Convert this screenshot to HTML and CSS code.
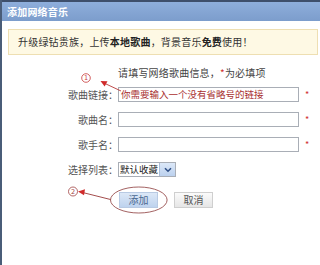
FILE: index.html
```html
<!DOCTYPE html>
<html lang="zh-CN">
<head>
<meta charset="utf-8">
<title>添加网络音乐</title>
<link rel="stylesheet" href="styles.css">
</head>
<body>
<div class="win">
  <div class="titlebar">添加网络音乐</div>
  <div class="notice">升级绿钻贵族，上传<b>本地歌曲</b>，背景音乐<b>免费</b>使用！</div>
  <div class="intro">请填写网络歌曲信息，<span class="star">*</span>为必填项</div>
  <div class="form">
    <div class="row">
      <span class="label">歌曲链接：</span>
      <div class="input hint">你需要输入一个没有省略号的链接</div>
      <span class="req">*</span>
    </div>
    <div class="row">
      <span class="label">歌曲名：</span>
      <div class="input"></div>
      <span class="req">*</span>
    </div>
    <div class="row">
      <span class="label">歌手名：</span>
      <div class="input"></div>
      <span class="req">*</span>
    </div>
    <div class="row">
      <span class="label">选择列表：</span>
      <div class="select">
        <span class="sel-text">默认收藏</span>
        <span class="sel-btn"><svg width="8" height="6" viewBox="0 0 8 6"><path d="M1 1.2 L4 4.2 L7 1.2" fill="none" stroke="#2f4f86" stroke-width="1.6"/></svg></span>
      </div>
    </div>
  </div>
  <div class="actions">
    <button class="btn primary">添加</button>
    <button class="btn">取消</button>
  </div>
  <svg class="annot" width="320" height="265" viewBox="0 0 320 265">
    <circle cx="86" cy="78" r="4.3" fill="none" stroke="#c83a3a" stroke-width="0.8"/>
    <text x="86" y="80.4" font-size="6.5" fill="#c83a3a" text-anchor="middle" font-family="DejaVu Sans, sans-serif">1</text>
    <line x1="121" y1="91" x2="105" y2="83.5" stroke="#b83a3a" stroke-width="0.9"/>
    <path d="M100.5 81 L107.5 81.2 L104.6 86.6 Z" fill="#d02a2a"/>
    <circle cx="73" cy="191.5" r="4.5" fill="none" stroke="#a04040" stroke-width="0.8"/>
    <text x="73" y="193.9" font-size="6.5" fill="#a04040" text-anchor="middle" font-family="DejaVu Sans, sans-serif">2</text>
    <line x1="110.5" y1="199.5" x2="83" y2="192.6" stroke="#9a3a3a" stroke-width="0.9"/>
    <path d="M78 191.5 L85 189.2 L84 195.2 Z" fill="#d02a2a"/>
    <ellipse cx="138.8" cy="200" rx="28.3" ry="13" fill="none" stroke="#8c3a3a" stroke-width="0.8"/>
  </svg>
</div>
</body>
</html>
```
FILE: styles.css
```css
html, body {
  margin: 0;
  padding: 0;
  background: #fff;
}
body {
  width: 320px;
  height: 265px;
  overflow: hidden;
  font-family: "Noto Sans CJK SC", "Noto Sans", sans-serif;
  font-size: 10px;
  color: #555;
}
.win {
  position: relative;
  height: 265px;
  box-sizing: border-box;
  border-left: 2px solid #4a5d78;
}
.titlebar {
  height: 19px;
  border-top: 2px solid #3e4f6b;
  background: linear-gradient(#8eaedb, #7c9dcc);
  color: #fff;
  font-weight: bold;
  line-height: 19px;
  padding-left: 5px;
  letter-spacing: 0.2px;
}
.notice {
  margin: 8px 2px 0 6px;
  height: 24px;
  border: 1px solid #eedfb2;
  background: #fef9e4;
  line-height: 24px;
  padding-left: 9px;
  color: #333;
  letter-spacing: 0.2px;
}
.notice b {
  color: #222;
}
.intro {
  margin-top: 12px;
  height: 12px;
  line-height: 12px;
  padding-left: 116px;
  color: #444;
  letter-spacing: 0.2px;
}
.star, .req {
  color: #d03030;
}
.form {
  margin-top: 8px;
  display: flex;
  flex-direction: column;
  gap: 10px;
}
.row {
  display: flex;
  align-items: center;
  height: 15px;
}
.label {
  width: 116px;
  text-align: right;
  color: #555;
  flex: none;
}
.input {
  width: 179px;
  height: 13px;
  border: 1px solid #a9aeb6;
  background: #fff;
  flex: none;
}
.hint {
  color: #a83030;
  font-size: 9.5px;
  line-height: 13px;
  padding-left: 2px;
  width: 177px;
  overflow: hidden;
  white-space: nowrap;
}
.req {
  margin-left: 6px;
  font-size: 9px;
}
.select {
  display: flex;
  height: 15px;
  width: 58px;
  box-sizing: border-box;
  border: 1px solid #a9aeb6;
  background: #fff;
  flex: none;
}
.sel-text {
  flex: 1;
  min-width: 0;
  line-height: 13px;
  color: #222;
  white-space: nowrap;
  overflow: hidden;
  font-size: 9.5px;
  padding-left: 1px;
}
.sel-btn {
  width: 15px;
  flex: none;
  background: linear-gradient(#dce8f8, #bcd1ee);
  border-left: 1px solid #a9bcd8;
  display: flex;
  align-items: center;
  justify-content: center;
}
.actions {
  margin-top: 15px;
  padding-left: 117px;
  display: flex;
  gap: 16px;
}
.btn {
  height: 16px;
  width: 39px;
  padding: 0;
  font-family: inherit;
  font-size: 10px;
  line-height: 14px;
  border: 1px solid #cfcfcf;
  background: linear-gradient(#fbfbfb, #e6e6e6);
  color: #555;
}
.btn.primary {
  border-color: #b8cae3;
  background: linear-gradient(#dce8f7, #bed3ee);
  color: #4a6890;
}
.annot {
  position: absolute;
  left: -2px;
  top: 0;
  pointer-events: none;
}
```
